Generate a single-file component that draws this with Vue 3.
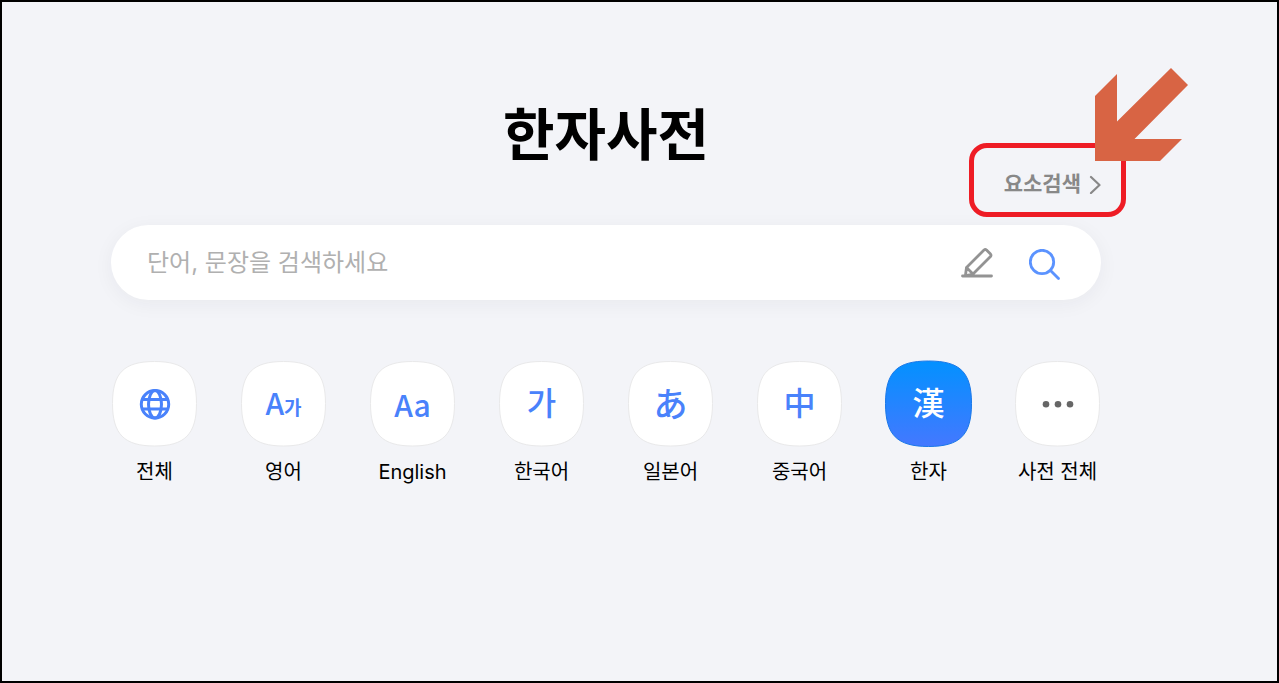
<script setup>
import { ref } from 'vue'

const query = ref('')
const dictionaries = [
  { label: '전체', kind: 'globe' },
  { label: '영어', kind: 'pair' },
  { label: 'English', kind: 'glyph', glyph: 'Aa', tone: 'latin' },
  { label: '한국어', kind: 'glyph', glyph: '가', tone: 'korean' },
  { label: '일본어', kind: 'glyph', glyph: 'あ', tone: 'japanese' },
  { label: '중국어', kind: 'glyph', glyph: '中', tone: 'chinese' },
  { label: '한자', kind: 'glyph', glyph: '漢', tone: 'hanja', active: true },
  { label: '사전 전체', kind: 'more' },
]
</script>

<template>
  <main class="page">
    <header class="head">
      <h1 class="title">한자사전</h1>
      <a class="element-link" href="#">
        <span>요소검색</span>
        <svg class="chevron" viewBox="0 0 12 20" aria-hidden="true">
          <path d="M2 3l8.500 8-8.500 8" />
        </svg>
        <svg class="arrow" viewBox="0 0 94 94" aria-hidden="true">
          <path d="M0 28L22 6v47.500L76 0l17 17-53.500 54H87L65 93H0z" />
        </svg>
      </a>
    </header>

    <form class="search" role="search" @submit.prevent>
      <input v-model="query" class="field" type="text" placeholder="단어, 문장을 검색하세요" aria-label="검색어" />
      <button class="tool pen" type="button" aria-label="필기 입력">
        <svg viewBox="0 0 32 32" aria-hidden="true">
          <path d="M1.500 29h29M4.500 28l1-7.500L23 3a2 2 0 0 1 2.500 0l4 4a2 2 0 0 1 0 2.500L12 27l-7 1.500M5.500 20.500L12 27" />
        </svg>
      </button>
      <button class="tool find" type="submit" aria-label="검색">
        <svg viewBox="0 0 32 32" aria-hidden="true">
          <circle cx="13" cy="13" r="11.700" />
          <path d="M21.500 21.500l8 8" />
        </svg>
      </button>
    </form>

    <nav class="dicts" aria-label="사전 목록">
      <a v-for="d in dictionaries" :key="d.label" class="dict" :class="{ active: d.active }" href="#">
        <span class="tile">
          <svg class="shape" viewBox="0 0 87 87" aria-hidden="true">
            <defs>
              <linearGradient id="tile-blue" x1="0" y1="0" x2="0" y2="1">
                <stop offset="0" stop-color="#0391ff" />
                <stop offset="1" stop-color="#4478ff" />
              </linearGradient>
            </defs>
            <path v-if="d.active" fill="url(#tile-blue)" stroke="#1a78e8" d="M43.500 1C75 1 86.500 12 86.500 43.500S75 86.500 43.500 86.500 .5 75 .5 43.500 12 1 43.500 1z" />
            <path v-else fill="#fff" stroke="#e9e9ea" d="M43.500 1.500C74 1.500 85.500 13 85.500 43.500S74 86 43.500 86 1.500 74 1.500 43.500 13 1.500 43.500 1.500z" />
          </svg>
          <svg v-if="d.kind === 'globe'" class="icon globe" viewBox="0 0 32 32" aria-hidden="true">
            <circle cx="16" cy="16.300" r="13.700" />
            <ellipse cx="16" cy="16.300" rx="6.500" ry="13.700" />
            <path d="M3.500 11.600h25M3.500 21h25" />
          </svg>
          <svg v-else-if="d.kind === 'more'" class="icon more" viewBox="0 0 32 32" aria-hidden="true">
            <circle cx="4" cy="16.300" r="3.300" />
            <circle cx="16" cy="16.300" r="3.300" />
            <circle cx="28" cy="16.300" r="3.300" />
          </svg>
          <span v-else-if="d.kind === 'pair'" class="glyph latin pair">A<span class="small">가</span></span>
          <span v-else class="glyph" :class="d.tone">{{ d.glyph }}</span>
        </span>
        <span class="label">{{ d.label }}</span>
      </a>
    </nav>
  </main>
</template>

<style>
body {
  background: #f3f4f8;
}
</style>

<style scoped>
.page {
  box-sizing: border-box;
  min-height: 100vh;
  padding: 88px 176px 88px 109px;
  border: 2px solid #000;
  background: #f3f4f8;
  font-family: Inter, "Noto Sans CJK KR", sans-serif;
  color: #000;
}
.head {
  display: grid;
  height: 135px;
}
.title {
  grid-area: 1 / 1;
  margin: 0;
  font-size: 56px;
  line-height: 90px;
  font-weight: 700;
  text-align: center;
}
.element-link {
  grid-area: 1 / 1;
  position: relative;
  place-self: end;
  display: flex;
  align-items: center;
  gap: 8px;
  margin-bottom: 26px;
  font-size: 21px;
  line-height: 30px;
  font-weight: 700;
  color: #888;
  text-decoration: none;
}
.element-link::after {
  content: "";
  position: absolute;
  inset: -26px -25px -18px -35px;
  border: 5px solid #ee1c25;
  border-radius: 18px;
}
.chevron {
  width: 12px;
  height: 20px;
  fill: none;
  stroke: currentColor;
  stroke-width: 2.2;
  stroke-linecap: round;
  stroke-linejoin: round;
}
.arrow {
  position: absolute;
  right: -88px;
  top: -101px;
  z-index: 1;
  width: 94px;
  height: 94px;
  fill: #d86444;
}
.search {
  display: flex;
  align-items: center;
  box-sizing: border-box;
  height: 75px;
  padding: 0 40px 0 36px;
  border-radius: 38px;
  background: #fff;
  box-shadow: 0 4px 20px rgba(30, 35, 60, 0.05);
}
.field {
  flex: 1;
  min-width: 0;
  height: 48px;
  padding: 0;
  border: 0;
  outline: 0;
  background: none;
  font-family: Inter, "Noto Sans CJK KR", sans-serif;
  font-size: 24px;
  font-weight: 400;
  color: #222;
}
.field::placeholder {
  color: #b0b0b0;
  opacity: 1;
}
.tool {
  width: 32px;
  height: 32px;
  padding: 0;
  border: 0;
  background: none;
}
.tool svg {
  display: block;
  width: 32px;
  height: 32px;
  fill: none;
  stroke-linecap: round;
  stroke-linejoin: round;
}
.pen {
  margin-right: 36px;
  stroke: #939393;
  stroke-width: 2.8;
}
.find {
  margin-top: 4px;
  stroke: #5b93ff;
  stroke-width: 2.8;
}
.dicts {
  display: flex;
  justify-content: space-between;
  margin-top: 60px;
}
.dict {
  display: flex;
  flex-direction: column;
  align-items: center;
  width: 87px;
  color: #000;
  text-decoration: none;
}
.tile {
  display: grid;
  place-items: center;
  width: 87px;
  height: 87px;
}
.tile > * {
  grid-area: 1 / 1;
}
.shape {
  width: 87px;
  height: 87px;
}
.icon {
  width: 32px;
  height: 32px;
}
.globe {
  fill: none;
  stroke: #4982fb;
  stroke-width: 3;
}
.more {
  fill: #666;
}
.glyph {
  z-index: 1;
  font-size: 32px;
  line-height: 40px;
  font-weight: 500;
  color: #4982fb;
}
.glyph.latin {
  font-family: "Noto Sans CJK KR", sans-serif;
  font-size: 30px;
  font-weight: 500;
}
.glyph.pair {
  padding-top: 2px;
}
.small {
  font-size: 19px;
  font-weight: 700;
}
.glyph.japanese {
  padding-bottom: 2px;
  font-family: "Noto Sans CJK JP", sans-serif;
  font-size: 34px;
}
.active .glyph {
  color: #fff;
}
.label {
  font-size: 20px;
  line-height: 30px;
  margin-top: 10px;
  white-space: nowrap;
}
</style>
